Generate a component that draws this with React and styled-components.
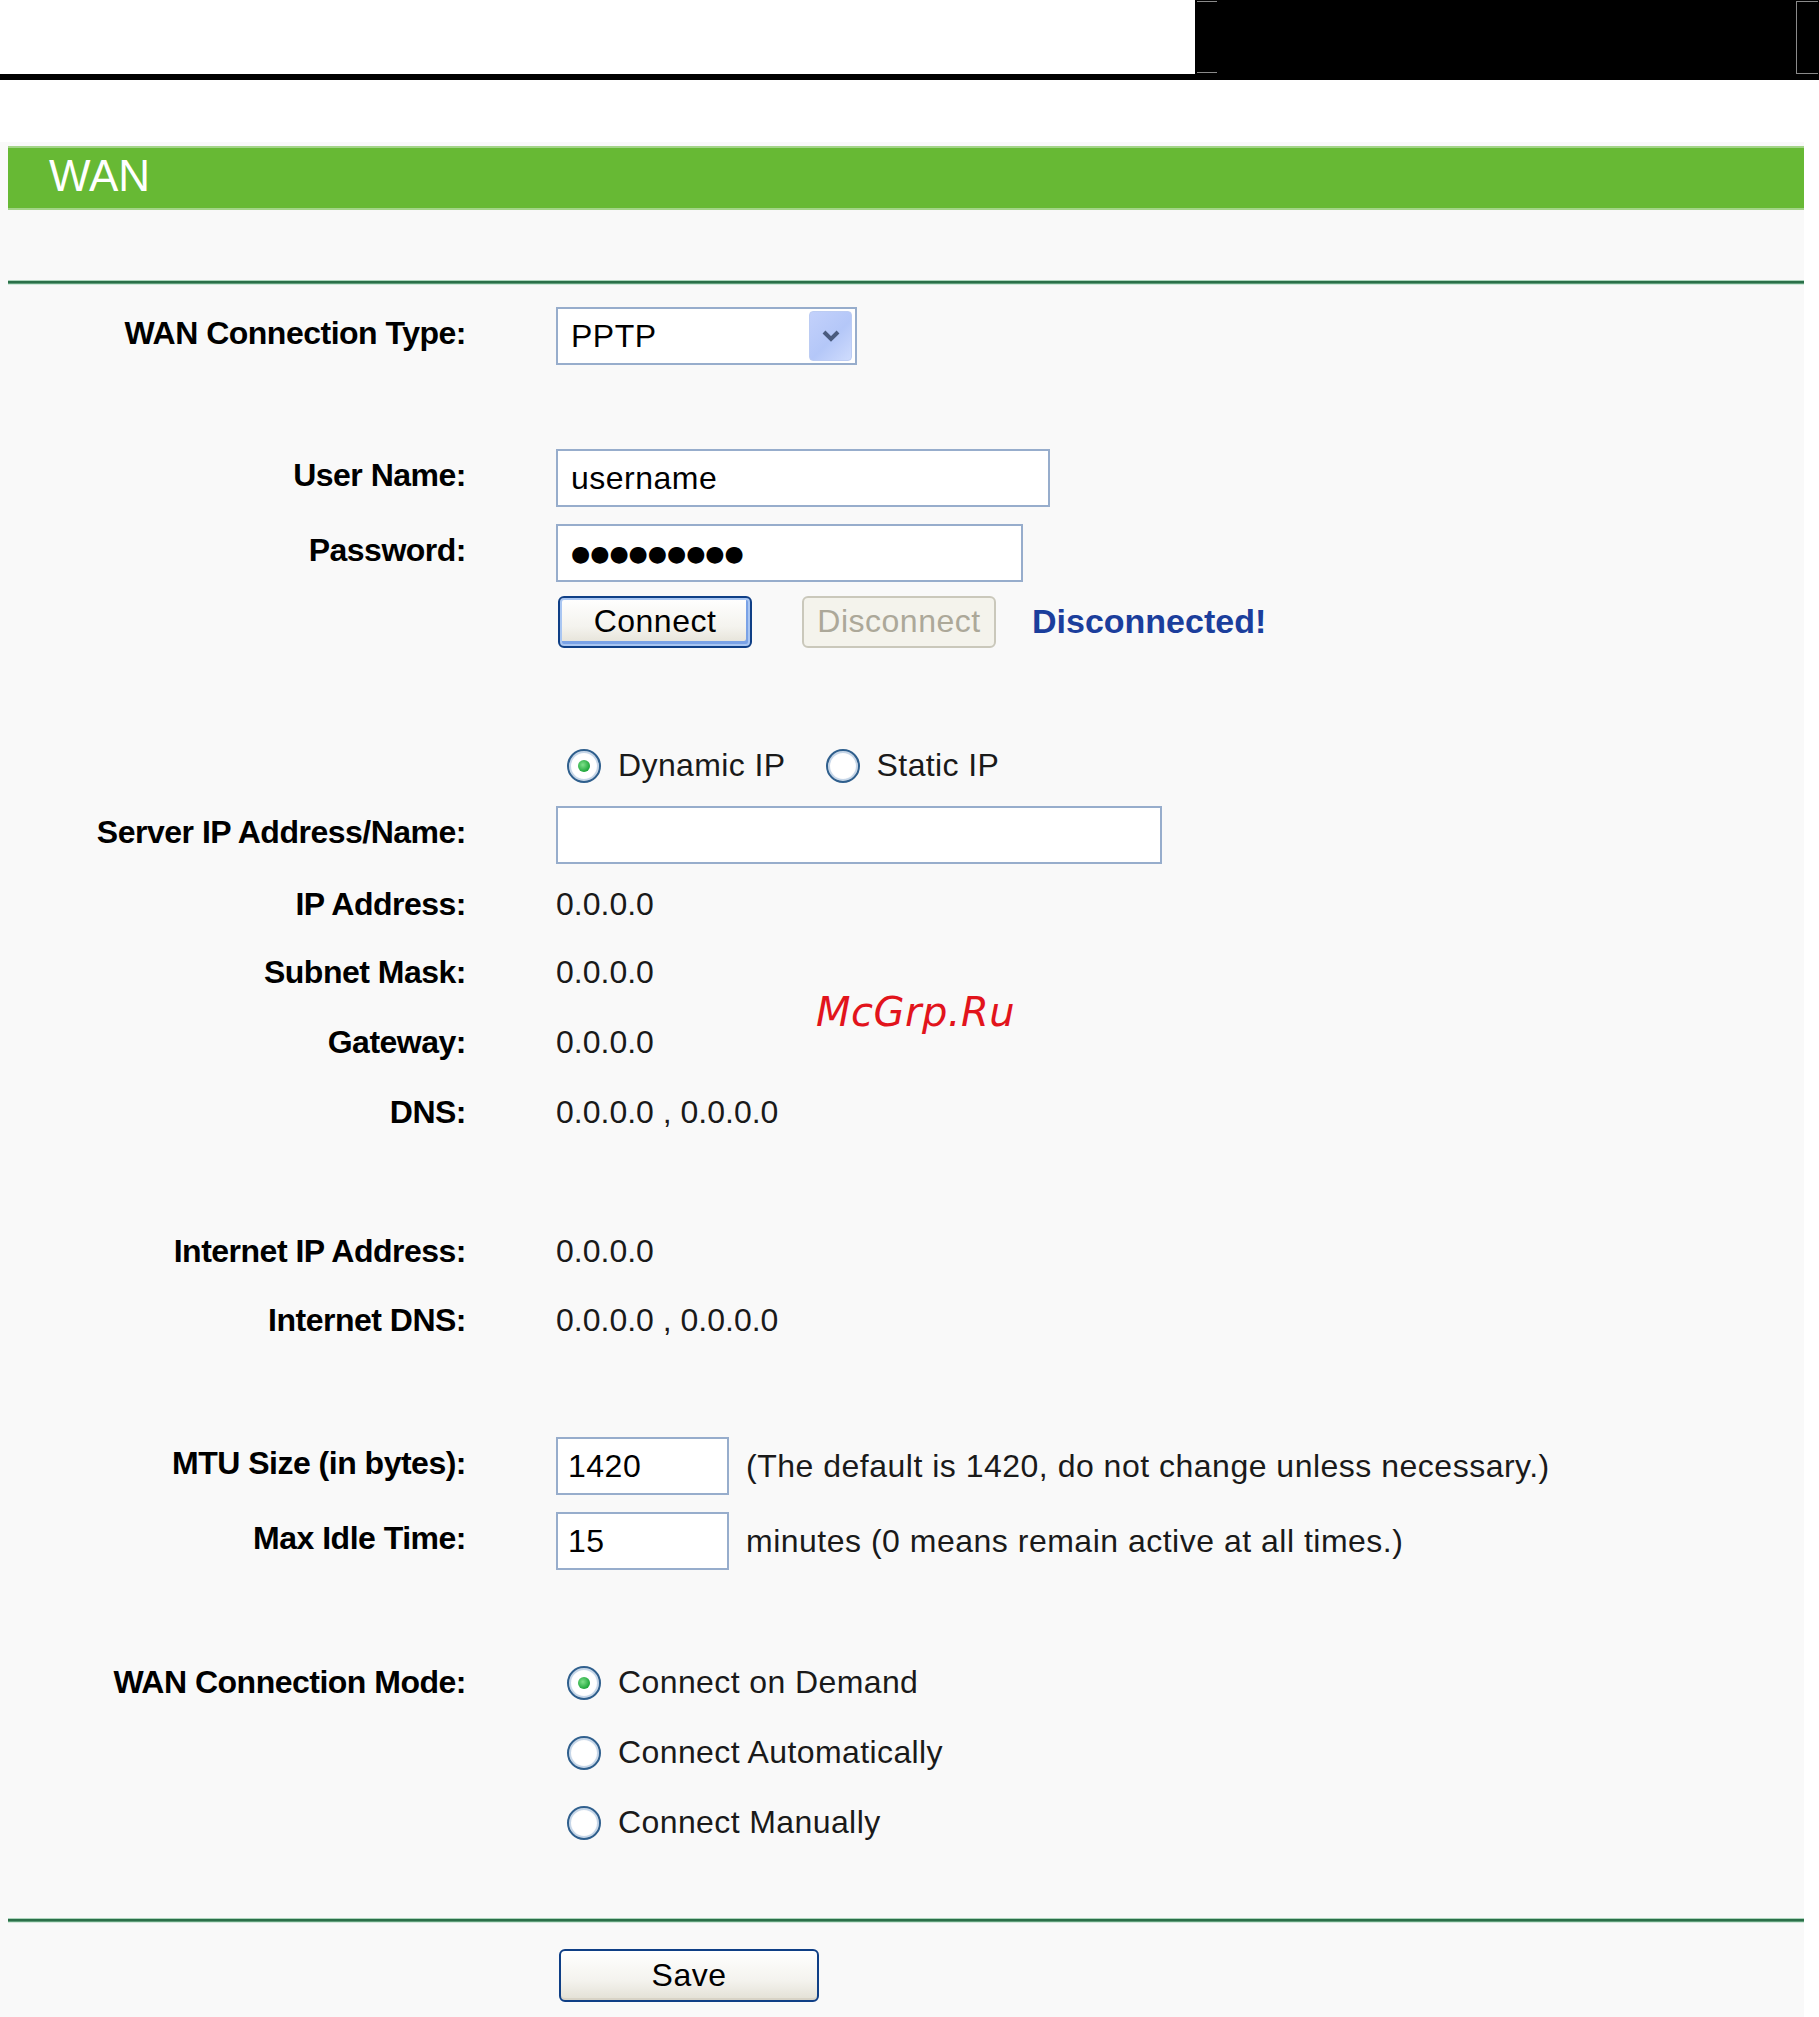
import React from 'react';
import styled, { createGlobalStyle } from 'styled-components';

const GlobalStyle = createGlobalStyle`
  body {
    margin: 0;
    background: #ffffff;
    font-family: "Liberation Sans", Arial, sans-serif;
  }
`;

const Page = styled.div`
  position: relative;
  width: 1819px;
  min-height: 2017px;
`;

const TopStrip = styled.div`
  display: flex;
  justify-content: flex-end;
  height: 74px;
`;

const BlackBox = styled.div`
  position: relative;
  width: 624px;
  height: 74px;
  background: #000;
`;

const CropTick = styled.span`
  position: absolute;
  left: 2px;
  width: 20px;
  height: 1px;
  background: #8a8a8a;
  top: ${p => p.$y}px;
`;

const CropBracket = styled.span`
  position: absolute;
  left: 601px;
  top: 1px;
  width: 21px;
  height: 71px;
  border: 1px solid #8a8a8a;
  border-right: none;
`;

const Rule = styled.div`
  height: 6px;
  background: #000;
`;

const Panel = styled.div`
  width: 1804px;
  margin-top: 62px;
  padding: 4px 0 15px;
  background: #f9f9f9;
`;

const TitleBar = styled.div`
  box-sizing: border-box;
  display: flex;
  align-items: center;
  margin-left: 8px;
  height: 64px;
  padding: 0 0 4px 41px;
  background: #67b934;
  border-top: 2px solid #a3d488;
  border-bottom: 2px solid #a3d488;
  color: #fff;
  font-size: 44px;
  line-height: 1;
`;

const Divider = styled.div`
  margin: ${p => p.$mt}px 0 0 8px;
  height: 5px;
  background: linear-gradient(#acd5bc 0 1px, #2b7049 1px 3px, #5f9e7a 3px 4px, #d4e9dc 4px 5px);
`;

const Row = styled.div`
  display: grid;
  grid-template-columns: 466px 1fr;
  column-gap: 90px;
  align-items: ${p => (p.$start ? 'start' : 'center')};
  height: ${p => (p.$h ? `${p.$h}px` : 'auto')};
  margin-top: ${p => p.$mt}px;
`;

const Label = styled.div`
  margin-bottom: ${p => (p.$raise ? 6 : 0)}px;
  text-align: right;
  font-size: 32px;
  font-weight: bold;
  line-height: 35px;
  letter-spacing: -0.5px;
  color: #000;
  white-space: nowrap;
`;

const Field = styled.div`
  display: flex;
  align-items: center;
  gap: ${p => p.$gap || 0}px;
  font-size: 32px;
  letter-spacing: ${p => (p.$tight ? 0 : 0.5)}px;
  color: #1a1a1a;
  white-space: nowrap;
`;

const TextInput = styled.input`
  box-sizing: border-box;
  width: ${p => p.$w}px;
  height: ${p => p.$h || 58}px;
  margin: 0;
  padding: 0 0 0 ${p => p.$pad || 13}px;
  border: 2px solid #97adcc;
  background: #fff;
  font-family: ${p => (p.$dots ? '"DejaVu Sans", sans-serif' : '"Liberation Sans", Arial, sans-serif')};
  font-size: ${p => (p.$dots ? 22 : 32)}px;
  letter-spacing: ${p => (p.$dots ? '0' : '0.5px')};
  color: #000;
  outline: none;
`;

const SelectBox = styled.div`
  box-sizing: border-box;
  display: flex;
  align-items: center;
  justify-content: space-between;
  width: 301px;
  height: 58px;
  padding: 0 3px 0 13px;
  border: 2px solid #97adcc;
  background: #fff;
  font-size: 32px;
  color: #000;
`;

const SelectArrow = styled.span`
  display: flex;
  align-items: center;
  justify-content: center;
  width: 41px;
  height: 48px;
  border-radius: 4px;
  background: linear-gradient(135deg, #c3d1fb 0%, #b4c7f8 55%, #cfdcfd 100%);
  border: 1px solid #bcccf3;
`;

const Button = styled.button`
  box-sizing: border-box;
  width: ${p => p.$w}px;
  height: ${p => p.$h || 52}px;
  margin: 0;
  padding: 0;
  border-radius: 6px;
  font-family: "Liberation Sans", Arial, sans-serif;
  font-size: 32px;
  letter-spacing: 0.5px;
  color: #000;
  border: 2px solid #0f3f86;
  background: linear-gradient(#ffffff 0%, #f4f3ee 60%, #e3e0d5 100%);
  box-shadow: ${p => (p.$primary ? 'inset 0 0 0 2px #a9c6f2, inset -2px -3px 0 2px #7aa2e6' : 'inset 0 -2px 0 #d8d3c6')};

  &:disabled {
    border-color: #cac8bb;
    background: #f4f3ec;
    color: #aca899;
    box-shadow: none;
  }
`;

const Status = styled.span`
  margin-left: 36px;
  font-size: 34px;
  font-weight: bold;
  letter-spacing: 0;
  color: #1b3e9c;
`;

const RadioList = styled.div`
  display: flex;
  flex-direction: ${p => (p.$column ? 'column' : 'row')};
  gap: ${p => p.$gap}px;
  margin-left: 11px;
`;

const RadioItem = styled.label`
  display: flex;
  align-items: center;
  gap: 17px;
  height: 35px;
  font-size: 32px;
  letter-spacing: 0.4px;
  color: #1a1a1a;
  white-space: nowrap;
`;

const RadioCircle = styled.span`
  box-sizing: border-box;
  display: flex;
  align-items: center;
  justify-content: center;
  width: 34px;
  height: 34px;
  border-radius: 50%;
  border: 2px solid #2f5f8d;
  background: radial-gradient(circle, #ffffff 55%, #e4e8ee 100%);
  box-shadow: inset 0 0 0 2px #c6d6e8;

  &::after {
    content: '';
    display: ${p => (p.$checked ? 'block' : 'none')};
    width: 12px;
    height: 12px;
    border-radius: 50%;
    background: radial-gradient(circle at 40% 40%, #7fe08a, #1ea63a 70%);
  }
`;

const Watermark = styled.div`
  position: absolute;
  left: 816px;
  top: 992px;
  font-family: "DejaVu Sans", sans-serif;
  font-style: italic;
  font-size: 40px;
  line-height: 1;
  letter-spacing: 0.5px;
  color: #e2141c;
`;

const Radio = ({ checked, children }) => (
  <RadioItem>
    <RadioCircle $checked={checked} />
    {children}
  </RadioItem>
);

const Chevron = () => (
  <svg width="20" height="14" viewBox="0 0 20 14">
    <path d="M3 3 L10 10 L17 3" fill="none" stroke="#4a5b7e" strokeWidth="4" strokeLinejoin="miter" />
  </svg>
);

const infoRows = [
  { label: 'IP Address:', value: '0.0.0.0', mt: 20 },
  { label: 'Subnet Mask:', value: '0.0.0.0', mt: 28 },
  { label: 'Gateway:', value: '0.0.0.0', mt: 30 },
  { label: 'DNS:', value: '0.0.0.0 , 0.0.0.0', mt: 30 },
  { label: 'Internet IP Address:', value: '0.0.0.0', mt: 99 },
  { label: 'Internet DNS:', value: '0.0.0.0 , 0.0.0.0', mt: 29 },
];

const passwordMask = '\u25CF'.repeat(9);

export default function App() {
  return (
    <Page>
      <GlobalStyle />
      <TopStrip>
        <BlackBox>
          <CropTick $y={1} />
          <CropTick $y={72} />
          <CropBracket />
        </BlackBox>
      </TopStrip>
      <Rule />

      <Panel>
        <TitleBar>WAN</TitleBar>
        <Divider $mt={70} />

        <Row $mt={22} $h={58}>
          <Label $raise>WAN Connection Type:</Label>
          <Field>
            <SelectBox>
              PPTP
              <SelectArrow><Chevron /></SelectArrow>
            </SelectBox>
          </Field>
        </Row>

        <Row $mt={84} $h={58}>
          <Label $raise>User Name:</Label>
          <Field>
            <TextInput $w={494} defaultValue="username" readOnly />
          </Field>
        </Row>

        <Row $mt={17} $h={58}>
          <Label $raise>Password:</Label>
          <Field>
            <TextInput $w={467} $dots defaultValue={passwordMask} readOnly />
          </Field>
        </Row>

        <Row $mt={13} $h={53}>
          <div />
          <Field>
            <Button $w={194} $primary style={{ marginLeft: 2 }}>Connect</Button>
            <Button $w={194} disabled style={{ marginLeft: 50 }}>Disconnect</Button>
            <Status>Disconnected!</Status>
          </Field>
        </Row>

        <Row $mt={100} $h={35}>
          <div />
          <RadioList $gap={40}>
            <Radio checked>Dynamic IP</Radio>
            <Radio>Static IP</Radio>
          </RadioList>
        </Row>

        <Row $mt={23} $h={58}>
          <Label $raise>Server IP Address/Name:</Label>
          <Field>
            <TextInput $w={606} defaultValue="" readOnly />
          </Field>
        </Row>

        {infoRows.map(r => (
          <Row key={r.label} $mt={r.mt} $h={40}>
            <Label>{r.label}</Label>
            <Field $tight>{r.value}</Field>
          </Row>
        ))}

        <Row $mt={97} $h={58}>
          <Label $raise>MTU Size (in bytes):</Label>
          <Field $gap={17}>
            <TextInput $w={173} $pad={10} defaultValue="1420" readOnly />
            (The default is 1420, do not change unless necessary.)
          </Field>
        </Row>

        <Row $mt={17} $h={58}>
          <Label $raise>Max Idle Time:</Label>
          <Field $gap={17}>
            <TextInput $w={173} $pad={10} defaultValue="15" readOnly />
            minutes (0 means remain active at all times.)
          </Field>
        </Row>

        <Row $mt={95} $start>
          <Label>WAN Connection Mode:</Label>
          <RadioList $column $gap={35}>
            <Radio checked>Connect on Demand</Radio>
            <Radio>Connect Automatically</Radio>
            <Radio>Connect Manually</Radio>
          </RadioList>
        </Row>

        <Divider $mt={78} />

        <Row $mt={26} $h={53}>
          <div />
          <Field>
            <Button $w={260} $h={53} style={{ marginLeft: 3 }}>Save</Button>
          </Field>
        </Row>
      </Panel>

      <Watermark>McGrp.Ru</Watermark>
    </Page>
  );
}
